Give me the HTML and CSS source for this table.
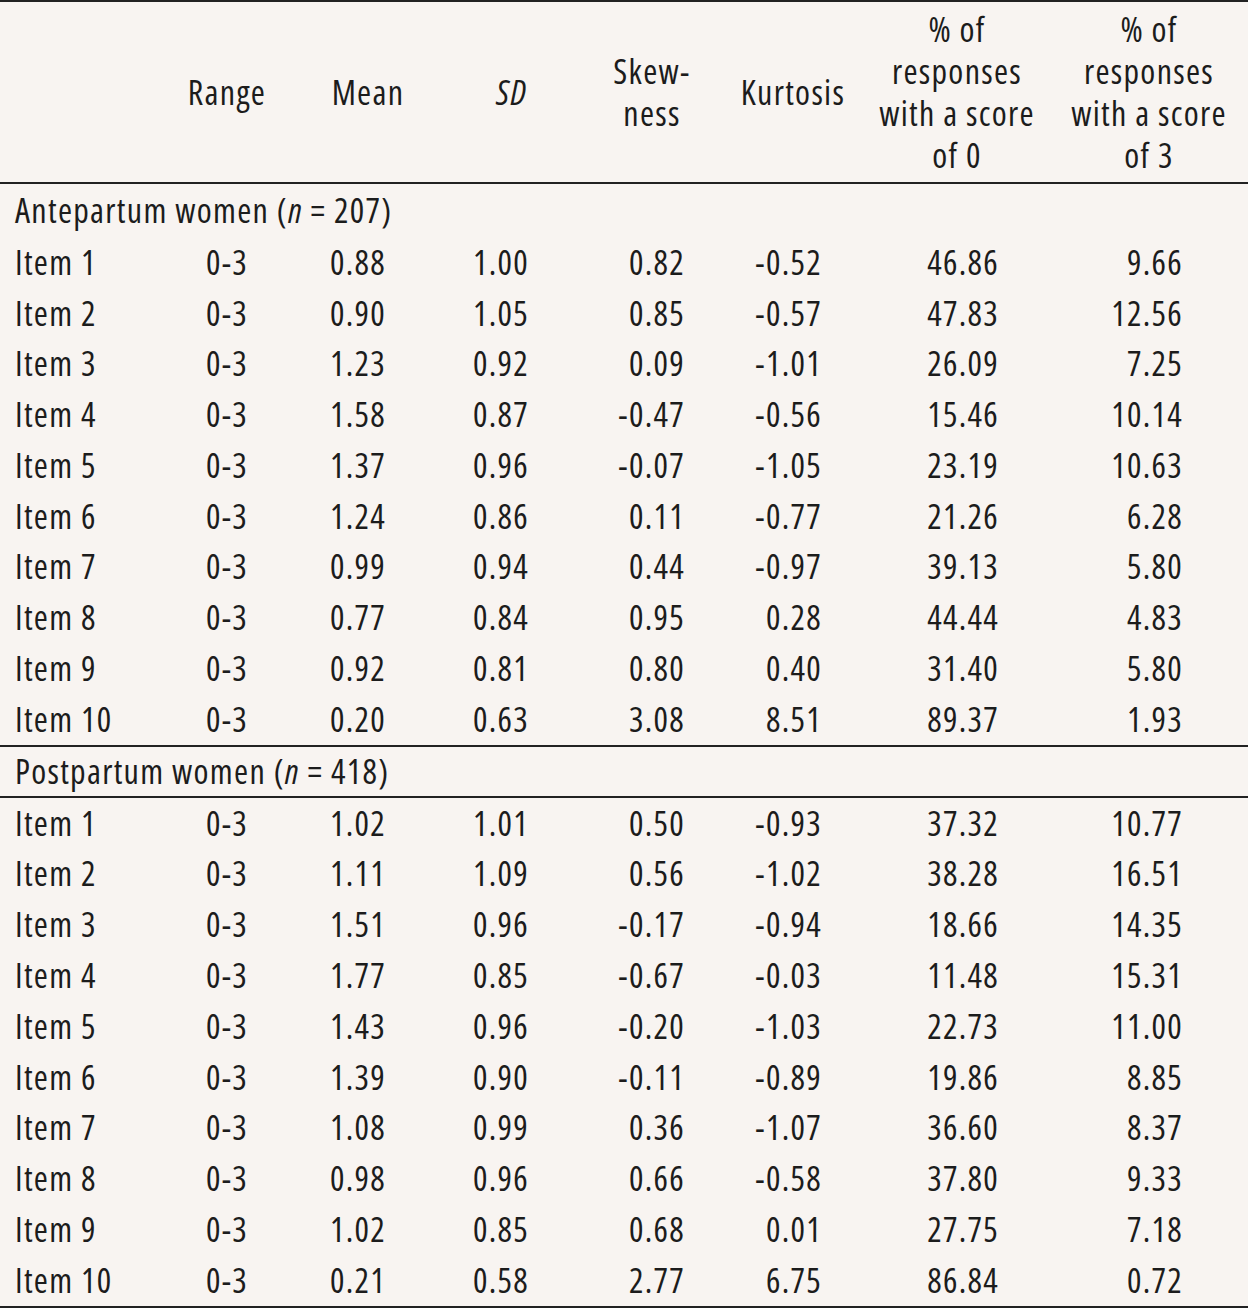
FILE: index.html
```html
<!DOCTYPE html>
<html lang="en">
<head>
<meta charset="utf-8">
<title>Item statistics</title>
<link rel="stylesheet" href="styles.css">
</head>
<body>
<table class="stats">
  <colgroup>
    <col class="c-label">
    <col class="c-range">
    <col class="c-mean">
    <col class="c-sd">
    <col class="c-skew">
    <col class="c-kurt">
    <col class="c-p0">
    <col class="c-p3">
  </colgroup>
  <thead>
    <tr>
      <th></th>
      <th>Range</th>
      <th>Mean</th>
      <th><i>SD</i></th>
      <th>Skew-<br>ness</th>
      <th>Kurtosis</th>
      <th>% of<br>responses<br>with a score<br>of 0</th>
      <th>% of<br>responses<br>with a score<br>of 3</th>
    </tr>
  </thead>
  <tbody class="block-a">
    <tr class="sec"><td colspan="8">Antepartum women (<i>n</i> = 207)</td></tr>
    <tr><td>Item 1</td><td class="r1">0-3</td><td class="r2">0.88</td><td class="r3">1.00</td><td class="r4">0.82</td><td class="r5">-0.52</td><td class="r6">46.86</td><td class="r7">9.66</td></tr>
    <tr><td>Item 2</td><td class="r1">0-3</td><td class="r2">0.90</td><td class="r3">1.05</td><td class="r4">0.85</td><td class="r5">-0.57</td><td class="r6">47.83</td><td class="r7">12.56</td></tr>
    <tr><td>Item 3</td><td class="r1">0-3</td><td class="r2">1.23</td><td class="r3">0.92</td><td class="r4">0.09</td><td class="r5">-1.01</td><td class="r6">26.09</td><td class="r7">7.25</td></tr>
    <tr><td>Item 4</td><td class="r1">0-3</td><td class="r2">1.58</td><td class="r3">0.87</td><td class="r4">-0.47</td><td class="r5">-0.56</td><td class="r6">15.46</td><td class="r7">10.14</td></tr>
    <tr><td>Item 5</td><td class="r1">0-3</td><td class="r2">1.37</td><td class="r3">0.96</td><td class="r4">-0.07</td><td class="r5">-1.05</td><td class="r6">23.19</td><td class="r7">10.63</td></tr>
    <tr><td>Item 6</td><td class="r1">0-3</td><td class="r2">1.24</td><td class="r3">0.86</td><td class="r4">0.11</td><td class="r5">-0.77</td><td class="r6">21.26</td><td class="r7">6.28</td></tr>
    <tr><td>Item 7</td><td class="r1">0-3</td><td class="r2">0.99</td><td class="r3">0.94</td><td class="r4">0.44</td><td class="r5">-0.97</td><td class="r6">39.13</td><td class="r7">5.80</td></tr>
    <tr><td>Item 8</td><td class="r1">0-3</td><td class="r2">0.77</td><td class="r3">0.84</td><td class="r4">0.95</td><td class="r5">0.28</td><td class="r6">44.44</td><td class="r7">4.83</td></tr>
    <tr><td>Item 9</td><td class="r1">0-3</td><td class="r2">0.92</td><td class="r3">0.81</td><td class="r4">0.80</td><td class="r5">0.40</td><td class="r6">31.40</td><td class="r7">5.80</td></tr>
    <tr class="last"><td>Item 10</td><td class="r1">0-3</td><td class="r2">0.20</td><td class="r3">0.63</td><td class="r4">3.08</td><td class="r5">8.51</td><td class="r6">89.37</td><td class="r7">1.93</td></tr>
  </tbody>
  <tbody class="block-b">
    <tr class="sec"><td colspan="8">Postpartum women (<i>n</i> = 418)</td></tr>
    <tr><td>Item 1</td><td class="r1">0-3</td><td class="r2">1.02</td><td class="r3">1.01</td><td class="r4">0.50</td><td class="r5">-0.93</td><td class="r6">37.32</td><td class="r7">10.77</td></tr>
    <tr><td>Item 2</td><td class="r1">0-3</td><td class="r2">1.11</td><td class="r3">1.09</td><td class="r4">0.56</td><td class="r5">-1.02</td><td class="r6">38.28</td><td class="r7">16.51</td></tr>
    <tr><td>Item 3</td><td class="r1">0-3</td><td class="r2">1.51</td><td class="r3">0.96</td><td class="r4">-0.17</td><td class="r5">-0.94</td><td class="r6">18.66</td><td class="r7">14.35</td></tr>
    <tr><td>Item 4</td><td class="r1">0-3</td><td class="r2">1.77</td><td class="r3">0.85</td><td class="r4">-0.67</td><td class="r5">-0.03</td><td class="r6">11.48</td><td class="r7">15.31</td></tr>
    <tr><td>Item 5</td><td class="r1">0-3</td><td class="r2">1.43</td><td class="r3">0.96</td><td class="r4">-0.20</td><td class="r5">-1.03</td><td class="r6">22.73</td><td class="r7">11.00</td></tr>
    <tr><td>Item 6</td><td class="r1">0-3</td><td class="r2">1.39</td><td class="r3">0.90</td><td class="r4">-0.11</td><td class="r5">-0.89</td><td class="r6">19.86</td><td class="r7">8.85</td></tr>
    <tr><td>Item 7</td><td class="r1">0-3</td><td class="r2">1.08</td><td class="r3">0.99</td><td class="r4">0.36</td><td class="r5">-1.07</td><td class="r6">36.60</td><td class="r7">8.37</td></tr>
    <tr><td>Item 8</td><td class="r1">0-3</td><td class="r2">0.98</td><td class="r3">0.96</td><td class="r4">0.66</td><td class="r5">-0.58</td><td class="r6">37.80</td><td class="r7">9.33</td></tr>
    <tr><td>Item 9</td><td class="r1">0-3</td><td class="r2">1.02</td><td class="r3">0.85</td><td class="r4">0.68</td><td class="r5">0.01</td><td class="r6">27.75</td><td class="r7">7.18</td></tr>
    <tr class="last"><td>Item 10</td><td class="r1">0-3</td><td class="r2">0.21</td><td class="r3">0.58</td><td class="r4">2.77</td><td class="r5">6.75</td><td class="r6">86.84</td><td class="r7">0.72</td></tr>
  </tbody>
</table>
</body>
</html>
```
FILE: styles.css
```css
html, body {
  margin: 0;
  padding: 0;
  background: #f8f4f1;
}
.stats {
  width: 1248px;
  border-collapse: collapse;
  table-layout: fixed;
  font-family: "Open Sans", "Noto Sans", sans-serif;
  font-stretch: 75%;
  font-size: 34px;
  letter-spacing: 1.3px;
  color: #1c1c1c;
  border-top: 2px solid #222;
}
.c-label { width: 160px; }
.c-range { width: 134px; }
.c-mean { width: 148px; }
.c-sd { width: 140px; }
.c-skew { width: 140px; }
.c-kurt { width: 142px; }
.c-p0 { width: 186px; }
.c-p3 { width: 198px; }
.stats th {
  font-weight: normal;
  text-align: center;
  vertical-align: middle;
  height: 180px;
  line-height: 42px;
  padding: 0;
  border-bottom: 2px solid #222;
  white-space: nowrap;
}
.stats td {
  padding: 0;
  white-space: nowrap;
  text-align: right;
  vertical-align: top;
}
.stats td:first-child {
  text-align: left;
  padding-left: 15px;
}
.block-a td {
  padding-top: 1px;
  line-height: 49.8px;
}
.block-b td {
  line-height: 50.8px;
}
.block-a .sec td {
  padding-top: 0;
  line-height: 52.7px;
}
.block-b .sec td {
  line-height: 49px;
  border-bottom: 2px solid #222;
}
.stats .sec td {
  text-align: left;
}
.stats tr.last td {
  border-bottom: 2px solid #222;
}
.r1 { padding-right: 46px !important; }
.r2 { padding-right: 56px !important; }
.r3 { padding-right: 53px !important; }
.r4 { padding-right: 37px !important; }
.r5 { padding-right: 42px !important; }
.r6 { padding-right: 51px !important; }
.r7 { padding-right: 65px !important; }
```
